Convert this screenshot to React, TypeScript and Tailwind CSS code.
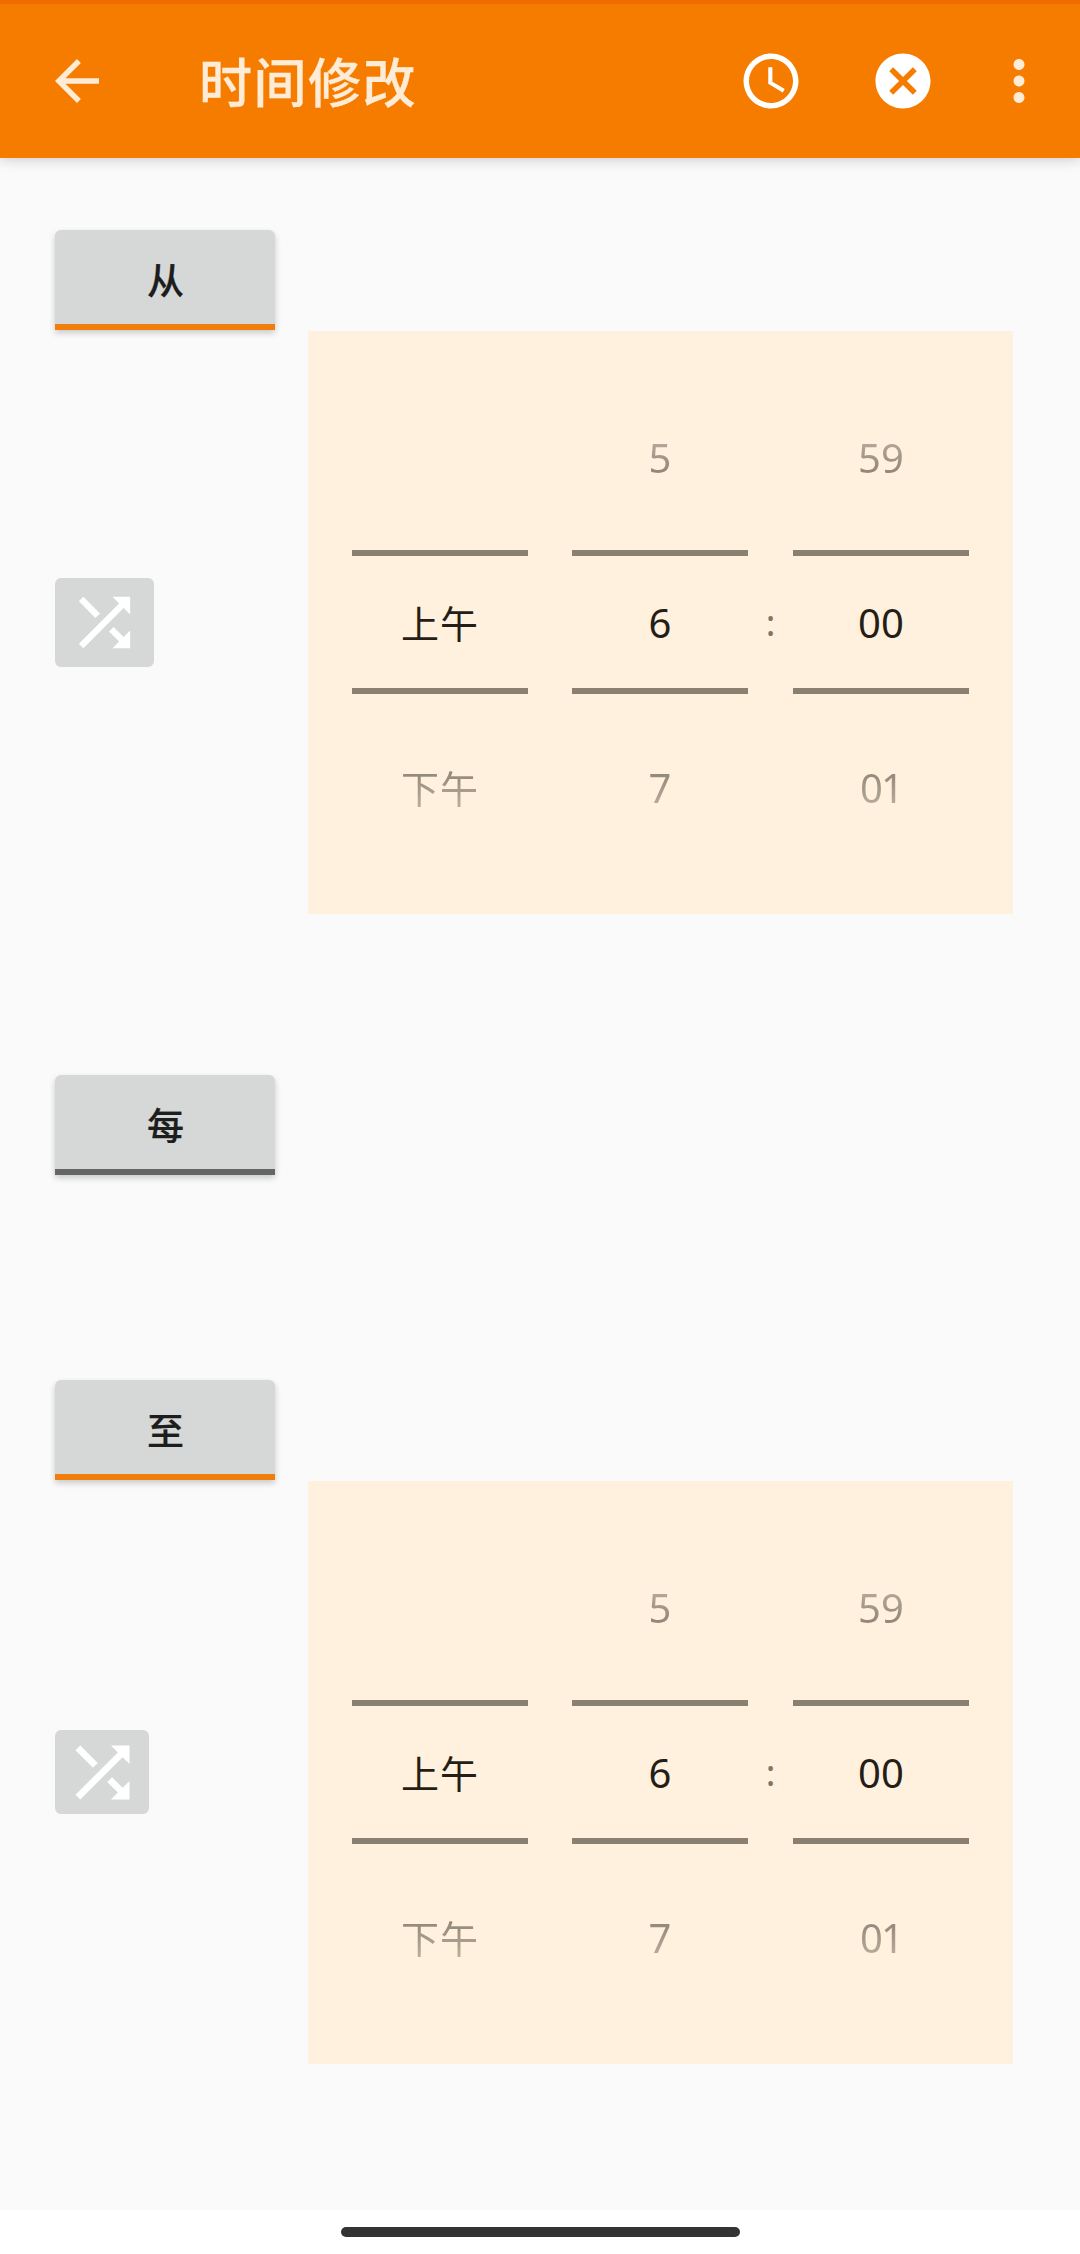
import type { ReactNode } from "react";

function Icon({ d, className }: { d: string; className: string }) {
  return (
    <svg viewBox="0 0 24 24" fill="currentColor" className={className} aria-hidden="true">
      <path d={d} />
    </svg>
  );
}

const ICONS = {
  back: "M20 11H7.83l5.59-5.59L12 4l-8 8 8 8 1.41-1.41L7.83 13H20v-2z",
  clock:
    "M11.99 2C6.47 2 2 6.48 2 12s4.47 10 9.99 10C17.52 22 22 17.52 22 12S17.52 2 11.99 2zM12 20c-4.42 0-8-3.58-8-8s3.58-8 8-8 8 3.58 8 8-3.58 8-8 8zm.5-13H11v6l5.25 3.15.75-1.23-4.5-2.67z",
  cancel:
    "M12 2C6.47 2 2 6.47 2 12s4.47 10 10 10 10-4.47 10-10S17.53 2 12 2zm5 13.59L15.59 17 12 13.41 8.41 17 7 15.59 10.59 12 7 8.41 8.41 7 12 10.59 15.59 7 17 8.41 13.41 12 17 15.59z",
  more: "M12 8c1.1 0 2-.9 2-2s-.9-2-2-2-2 .9-2 2 .9 2 2 2zm0 2c-1.1 0-2 .9-2 2s.9 2 2 2 2-.9 2-2-.9-2-2-2zm0 6c-1.1 0-2 .9-2 2s.9 2 2 2 2-.9 2-2-.9-2-2-2z",
  shuffle:
    "M10.59 9.17L5.41 4 4 5.41l5.17 5.17 1.42-1.41zM14.5 4l2.04 2.04L4 18.59 5.41 20 17.96 7.46 20 9.5V4h-5.5zm.33 9.41l-1.41 1.41 3.13 3.13L14.5 20H20v-5.5l-2.04 2.04-3.13-3.13z",
};

function ToggleButton({ label, on = false }: { label: string; on?: boolean }) {
  return (
    <button
      className={`flex h-[100px] w-[220px] items-center justify-center rounded-t-[6px] border-b-[6px] bg-[#d6d8d7] pt-[7px] pl-px text-[37px] leading-none font-medium text-[#1c1d1c] shadow-[0_3px_6px_rgba(0,0,0,0.2)] [-webkit-text-stroke:0.2px_currentColor] ${
        on ? "border-[#f07e0c]" : "border-[#646665]"
      }`}
    >
      {label}
    </button>
  );
}

function Wheel({
  prev,
  value,
  next,
  text = "text-[40px]",
}: {
  prev?: string;
  value: string;
  next: ReactNode;
  text?: string;
}) {
  return (
    <div className={`flex w-[176px] flex-col items-center leading-none text-[#241e16] ${text}`}>
      <div className="flex h-[165px] w-full items-center justify-center pt-px [mask-image:linear-gradient(to_bottom,transparent,rgba(0,0,0,0.85))]">
        {prev}
      </div>
      <div className="my-[10px] flex h-[144px] w-full items-center justify-center border-y-[6px] border-[#8a8072] pt-px">
        {value}
      </div>
      <div className="flex h-[165px] w-full items-center justify-center pt-[2px] [mask-image:linear-gradient(to_top,transparent,rgba(0,0,0,0.85))]">
        {next}
      </div>
    </div>
  );
}

function TimePicker() {
  return (
    <div className="flex h-[583px] w-[705px] items-start bg-[#fff1de] pt-11 pl-11">
      <Wheel value="上午" next="下午" text="text-[38px] tracking-[1px]" />
      <div className="w-11" />
      <Wheel prev="5" value="6" next="7" />
      <div className="flex h-[494px] w-[45px] items-center justify-center pt-[2px] text-[36px] leading-none text-[#7f7567]">
        :
      </div>
      <Wheel prev="59" value="00" next={<span className="tracking-[-2px]">01</span>} />
    </div>
  );
}

function PickerRow({ children }: { children: ReactNode }) {
  return (
    <div className="mt-px flex h-[583px] items-center pl-[55px]">
      <div className="flex w-[253px]">{children}</div>
      <TimePicker />
    </div>
  );
}

export default function App() {
  return (
    <div className="flex h-[2254px] w-[1080px] flex-col bg-[#fafafa] font-['Noto_Sans','Noto_Sans_CJK_SC',sans-serif]">
      <header className="relative flex h-[158px] items-center border-t-4 border-[#ef6c00] bg-[#f67c00] pl-11 text-[#ffecd6] shadow-[0_2px_12px_rgba(0,0,0,0.18)]">
        <Icon d={ICONS.back} className="size-[66px]" />
        <h1 className="ml-[89px] flex-1 pt-[3px] text-[53px] leading-none font-medium tracking-[1.5px] [-webkit-text-stroke:0.3px_currentColor]">
          时间修改
        </h1>
        <Icon d={ICONS.clock} className="size-[66px] text-white" />
        <Icon d={ICONS.cancel} className="ml-[66px] size-[66px] text-white" />
        <Icon d={ICONS.more} className="mr-7 ml-[50px] size-[66px]" />
      </header>

      <main className="flex flex-1 flex-col pt-[72px]">
        <section>
          <div className="pl-[55px]">
            <ToggleButton label="从" on />
          </div>
          <PickerRow>
            <button className="flex h-[89px] w-[99px] items-center justify-center rounded-[6px] bg-[#d6d8d7] text-white">
              <Icon d={ICONS.shuffle} className="size-[77px]" />
            </button>
          </PickerRow>
        </section>

        <section className="mt-[161px] pl-[55px]">
          <ToggleButton label="每" />
        </section>

        <section className="mt-[205px]">
          <div className="pl-[55px]">
            <ToggleButton label="至" on />
          </div>
          <PickerRow>
            <button className="mb-px flex h-[84px] w-[94px] items-center justify-center rounded-[6px] bg-[#d6d8d7] text-white">
              <Icon d={ICONS.shuffle} className="size-[81px]" />
            </button>
          </PickerRow>
        </section>
      </main>

      <footer className="flex h-11 justify-center bg-white pt-[17px]">
        <div className="h-[10px] w-[399px] rounded-full bg-[#333333]" />
      </footer>
    </div>
  );
}
